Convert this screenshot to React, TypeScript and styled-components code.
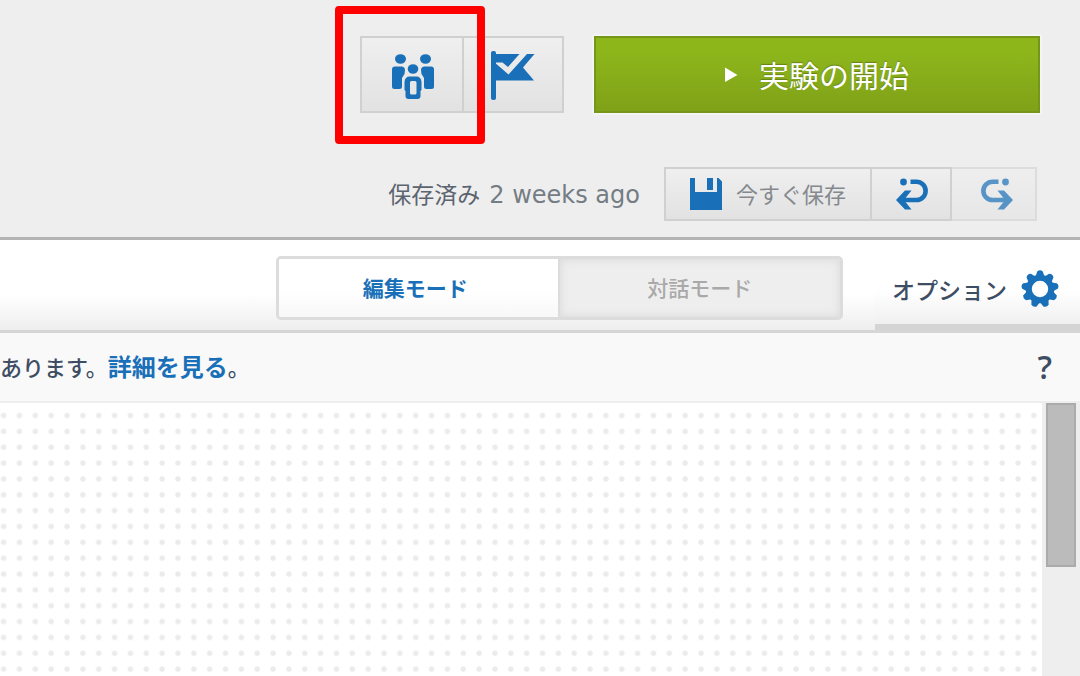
import React from "react";
import styled, { createGlobalStyle, css } from "styled-components";

const BLUE = "#1a70b8";
const INK = "#3d4d63";

const GlobalStyle = createGlobalStyle`
  *, *::before, *::after { box-sizing: border-box; }
  body {
    margin: 0;
    background: #fff;
    color: ${INK};
    font-family: "Open Sans", "Noto Sans CJK JP", sans-serif;
  }
  button { font: inherit; margin: 0; padding: 0; cursor: pointer; }
  svg { display: block; flex: none; overflow: visible; }
`;

const Page = styled.div`
  display: flex;
  flex-direction: column;
  min-height: 100vh;
  overflow: hidden;
`;

const Header = styled.header`
  display: flex;
  flex-direction: column;
  gap: 54px;
  padding: 36px 40px 16px;
  background: #eeeeee;
  border-bottom: 3px solid #b4b4b4;
`;

const ActionRow = styled.div`
  display: flex;
  justify-content: flex-end;
  gap: 30px;
`;

const SaveRow = styled.div`
  display: flex;
  justify-content: flex-end;
  align-items: center;
  gap: 24px;
  padding-right: 3px;
`;

const ButtonGroup = styled.div`
  display: flex;
  position: relative;
`;

const ToolButton = styled.button<{ $width: number; $tall?: boolean }>`
  display: flex;
  align-items: center;
  justify-content: center;
  gap: 14px;
  width: ${(p) => p.$width}px;
  height: ${(p) => (p.$tall ? 77 : 54)}px;
  border: 2px solid #d0d0d0;
  background: linear-gradient(#efefef, #e2e2e2);
  color: #85898e;
  font-size: 22px;
  line-height: 28px;

  & + & { border-left: 0; }
  &:disabled { border-color: #dcdcdc; background: linear-gradient(#eeeeee, #e7e7e7); cursor: default; }
  &:disabled svg { opacity: 0.7; }
`;

const Highlight = styled.div`
  position: absolute;
  top: -30px;
  left: -25px;
  width: 150px;
  height: 138px;
  border: 8px solid #ff0000;
  border-radius: 4px;
  pointer-events: none;
`;

const StartButton = styled.button`
  display: flex;
  align-items: center;
  justify-content: center;
  gap: 21px;
  width: 446px;
  height: 77px;
  padding-bottom: 2px;
  border: 2px solid #76961a;
  background: linear-gradient(#8db61b 20%, #80a118);
  box-shadow: 0 0 2px 1px #fafafa;
  color: #fff;
  font-size: 30px;
  text-shadow: 0 -1px 1px #66801a;
`;

const SavedStatus = styled.p`
  display: flex;
  align-items: baseline;
  gap: 9px;
  margin: 0;
  color: #5c6470;
  font-size: 23px;
  line-height: 32px;
`;

const SavedTime = styled.span`
  color: #747c84;
  font-family: "DejaVu Sans", sans-serif;
  font-size: 24px;
`;

const ModeBar = styled.nav`
  display: flex;
  justify-content: flex-end;
  height: 93px;
  background: linear-gradient(#fff 60%, #eeeeee);
  border-bottom: 3px solid #d6d6d6;
`;

const ModeSwitch = styled.div`
  display: grid;
  grid-template-columns: 1fr 1fr;
  width: 567px;
  height: 64px;
  margin: 16px 32px 0 0;
  border: 3px solid #dcdcdc;
  border-radius: 5px;
  overflow: hidden;
`;

const ModeButton = styled.button<{ $active?: boolean }>`
  border: 0;
  padding-bottom: 2px;
  font-size: 21px;
  ${(p) =>
    p.$active
      ? css`
          padding-right: 6px;
          background: linear-gradient(#fff 50%, #f8f8f8);
          color: ${BLUE};
          font-weight: 700;
          border-right: 2px solid #dcdcdc;
        `
      : css`
          background: #eeeeee;
          box-shadow: inset 0 0 10px #d8d8d8;
          color: #a9a9a9;
          font-weight: 500;
        `}
`;

const OptionsButton = styled.button`
  display: flex;
  align-items: center;
  justify-content: flex-end;
  gap: 14px;
  width: 205px;
  padding: 14px 21px 0 0;
  border: 0;
  border-bottom: 6px solid #d4d4d4;
  background: linear-gradient(#fff 60%, #f0f0f0);
  color: ${INK};
  font-size: 23px;
  font-weight: 500;
`;

const Notice = styled.div`
  display: flex;
  align-items: center;
  justify-content: space-between;
  height: 70px;
  padding-right: 28px;
  border-bottom: 2px solid #eeeeee;
  background: #f9f9f9;
`;

const NoticeText = styled.p`
  margin: 0;
  font-size: 22px;
  font-weight: 500;
  line-height: 32px;
  white-space: nowrap;
`;

const NoticeLink = styled.a`
  color: ${BLUE};
  font-size: 24px;
  font-weight: 700;
  text-decoration: none;
`;

const HelpButton = styled.button`
  border: 0;
  background: none;
  color: ${INK};
  font-size: 32px;
  font-weight: 600;
  line-height: 40px;
`;

const Workspace = styled.main`
  display: flex;
  flex: 1;
  min-height: 240px;
`;

const DotCanvas = styled.div`
  flex: 1;
  min-width: 0;
  overflow: hidden;

  svg { width: 100%; height: 100%; overflow: hidden; }
`;

const ScrollTrack = styled.div`
  width: 38px;
  padding: 0 4px;
  background: #eeeeee;
`;

const ScrollThumb = styled.div`
  height: 164px;
  border: 2px solid #aaabaa;
  background: #babbba;
`;

const PeopleIcon = () => (
  <svg width="46" height="48" viewBox="-2 -2 46 48" fill={BLUE} aria-hidden="true">
    <ellipse cx="9.500" cy="6" rx="5.500" ry="4.800" />
    <ellipse cx="34.500" cy="6" rx="5.500" ry="4.800" />
    <ellipse cx="22" cy="16" rx="5.300" ry="4.800" />
    <path d="M4 13.500H11Q14 14 14 17L13.500 21L11 25V33.500Q11 36 8.500 36H3.500Q1 36 1 33.500V16.500Q1 13.500 4 13.500Z" />
    <path d="M40 13.500H33Q30 14 30 17L30.500 21L33 25V33.500Q33 36 35.500 36H40.500Q43 36 43 33.500V16.500Q43 13.500 40 13.500Z" />
    <path
      fillRule="evenodd"
      d="M18.500 23.500H25.500Q30 23.500 30.500 29V37L29.500 38V43Q29.500 46 26.500 46H17.500Q14.500 46 14.500 43V38L13.500 37V29Q14 23.500 18.500 23.500ZM20.500 28Q19 28 19 29.500V40Q19 41.500 20.500 41.500H24Q25.500 41.500 25.500 40V29.500Q25.500 28 24 28Z"
    />
  </svg>
);

const FlagIcon = () => (
  <svg width="44" height="50" viewBox="0 0 44 50" fill={BLUE} aria-hidden="true">
    <rect x="0" y="1" width="5" height="49" rx="2" />
    <path d="M4 4H28.500L17 17L11.500 12.500H4Z" />
    <path d="M4 13L6 14.500L17.500 24.500L36 4H43.500L32 17.500L43 30.500H4Z" />
  </svg>
);

const DiskIcon = () => (
  <svg width="32" height="32" viewBox="0 0 32 32" fill={BLUE} aria-hidden="true">
    <path d="M0 0H5V14H27V0H28.500L32 3.500V32H0Z" />
    <rect x="17" y="0" width="6" height="12" />
  </svg>
);

const CurveIcon = ({ mirrored }: { mirrored?: boolean }) => (
  <svg width="34" height="34" viewBox="-2 0 34 34" aria-hidden="true">
    <g transform={mirrored ? "matrix(-1 0 0 1 34 0)" : undefined}>
      <circle cx="7.500" cy="5" r="3.400" fill={BLUE} />
      <path d="M14.500 4.800H20.500A9 9 0 0 1 20.500 23H7" fill="none" stroke={BLUE} strokeWidth="4.600" />
      <path d="M0 23L9 13.500H15.500L9.500 21V25L15.500 32.500H9Z" fill={BLUE} />
    </g>
  </svg>
);

const teeth = Array.from({ length: 9 }, (_, i) => i * 40);

const GearIcon = () => (
  <svg width="38" height="38" viewBox="-19 -19 38 38" fill={BLUE} aria-hidden="true">
    <circle r="11.200" fill="none" stroke={BLUE} strokeWidth="6" />
    {teeth.map((angle) => (
      <path key={angle} d="M-4.500 -12.500L-2.800 -17.500Q0 -20 2.800 -17.500L4.500 -12.500Z" transform={`rotate(${angle})`} />
    ))}
  </svg>
);

const PlayIcon = () => (
  <svg width="13" height="16" viewBox="0 0 13 16" fill="#fff" aria-hidden="true">
    <path d="M0 1.500L12.500 9L0 16Z" />
  </svg>
);

const DotGrid = () => (
  <svg aria-hidden="true">
    <defs>
      <pattern id="dots" width="15.850" height="15.850" x="-4.400" y="4.600" patternUnits="userSpaceOnUse">
        <circle cx="8" cy="8" r="2.700" fill="#ebebeb" />
      </pattern>
    </defs>
    <rect width="100%" height="100%" fill="url(#dots)" />
  </svg>
);

export default function App() {
  return (
    <Page>
      <GlobalStyle />
      <Header>
        <ActionRow>
          <ButtonGroup>
            <ToolButton $width={104} $tall aria-label="共同編集者">
              <PeopleIcon />
            </ToolButton>
            <ToolButton $width={100} $tall aria-label="目標">
              <FlagIcon />
            </ToolButton>
            <Highlight />
          </ButtonGroup>
          <StartButton>
            <PlayIcon />
            実験の開始
          </StartButton>
        </ActionRow>
        <SaveRow>
          <SavedStatus>
            保存済み <SavedTime>2 weeks ago</SavedTime>
          </SavedStatus>
          <ButtonGroup>
            <ToolButton $width={208}>
              <DiskIcon />
              今すぐ保存
            </ToolButton>
            <ToolButton $width={80} aria-label="元に戻す">
              <CurveIcon />
            </ToolButton>
            <ToolButton $width={85} disabled aria-label="やり直す">
              <CurveIcon mirrored />
            </ToolButton>
          </ButtonGroup>
        </SaveRow>
      </Header>
      <ModeBar>
        <ModeSwitch>
          <ModeButton $active>編集モード</ModeButton>
          <ModeButton>対話モード</ModeButton>
        </ModeSwitch>
        <OptionsButton>
          オプション
          <GearIcon />
        </OptionsButton>
      </ModeBar>
      <Notice>
        <NoticeText>
          あります。<NoticeLink href="#details">詳細を見る</NoticeLink>。
        </NoticeText>
        <HelpButton aria-label="ヘルプ">?</HelpButton>
      </Notice>
      <Workspace>
        <DotCanvas>
          <DotGrid />
        </DotCanvas>
        <ScrollTrack>
          <ScrollThumb />
        </ScrollTrack>
      </Workspace>
    </Page>
  );
}
